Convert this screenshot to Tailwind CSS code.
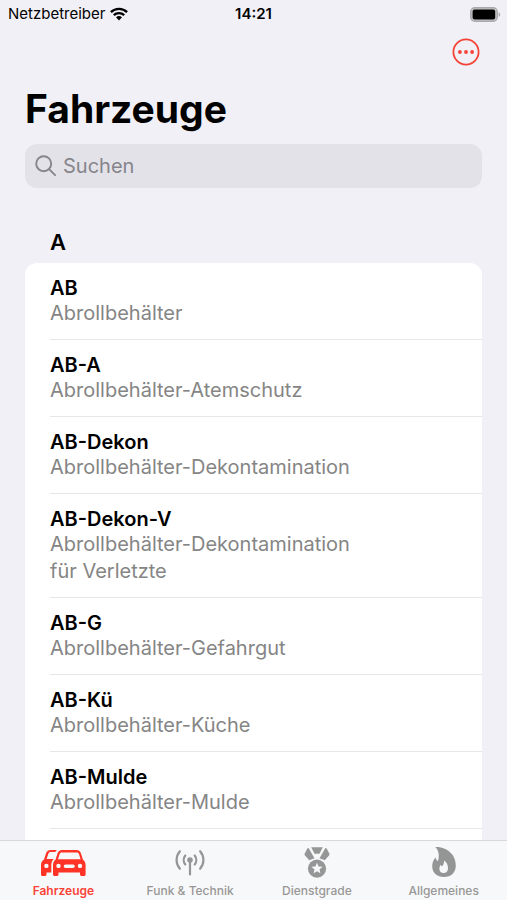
<!DOCTYPE html>
<html lang="de">
<head>
<meta charset="utf-8">
<meta name="viewport" content="width=device-width, initial-scale=1">
<title>Fahrzeuge</title>
<script src="https://cdn.jsdelivr.net/npm/@tailwindcss/browser@4"></script>
</head>
<body class="flex h-screen flex-col overflow-hidden bg-[#f1f0f6] font-['Inter','Liberation_Sans',sans-serif] text-black">
  <div class="grid h-7 shrink-0 grid-cols-3 items-center px-[8px] text-[15px] leading-5">
    <div class="flex items-center gap-[5px]">
      <span>Netzbetreiber</span>
      <svg class="h-[14px] w-[18px] shrink-0" viewBox="0 0 18 14" fill="none" stroke="#000" stroke-width="2.3" aria-hidden="true"><path d="M.9 5.1a11.6 11.6 0 0 1 16.2 0M3.8 8.2a7.5 7.5 0 0 1 10.4 0"/><path d="M6 10.3a4.4 4.4 0 0 1 6 0L9 13.4z" fill="#000" stroke="none"/></svg>
    </div>
    <time class="text-center font-semibold">14:21</time>
    <svg class="h-[15px] w-[29px] justify-self-end overflow-visible" viewBox="0 0 29 15" role="img" aria-label="Batterie voll"><rect x=".8" y=".8" width="26.400" height="13.4" rx="4" fill="#c4c4c7" stroke="#aaaaae" stroke-width="1.5"/><rect x="2.600" y="2.600" width="22.600" height="9.8" rx="2"/><path d="M28.600 5.2c2.2.8 2.2 3.8 0 4.6z" fill="#aaaaae"/></svg>
  </div>

  <header class="shrink-0 px-[25px]">
    <div class="flex h-12 justify-end pt-[10px]">
      <button type="button" aria-label="Mehr" class="mr-[2px] h-7 w-7">
        <svg class="h-7 w-7" viewBox="0 0 28 28" fill="#f44336" aria-hidden="true"><circle cx="14" cy="14" r="12.6" fill="none" stroke="#f44336" stroke-width="1.8"/><circle cx="7.9" cy="14" r="1.9"/><circle cx="14" cy="14" r="1.9"/><circle cx="20.1" cy="14" r="1.9"/></svg>
      </button>
    </div>
    <h1 class="pt-[7px] text-[39px] leading-[52px] font-bold">Fahrzeuge</h1>
    <label class="mt-[9px] flex h-11 items-center gap-[6px] rounded-xl bg-[#e3e2e8] px-[10px]">
      <svg class="h-[22px] w-[22px] shrink-0" viewBox="0 0 22 22" fill="none" stroke="#85858b" stroke-width="1.9" stroke-linecap="round" aria-hidden="true"><circle cx="8.7" cy="8.7" r="7.5"/><path d="m14.3 14.3 5.8 5.8"/></svg>
      <input type="search" aria-label="Suchen" placeholder="Suchen" class="min-w-0 flex-1 bg-transparent text-xl leading-7 outline-none placeholder:text-[#85858b]">
    </label>
  </header>

  <main class="min-h-0 flex-1 overflow-hidden px-[25px] pt-10">
    <h2 class="pb-[7px] pl-[25px] text-[22px] leading-7 font-semibold">A</h2>
    <ul class="rounded-t-xl bg-white pl-[25px]">
      <li class="border-b border-[#e7e7e9] pt-[13px] pb-3"><h3 class="text-xl leading-6 font-semibold">AB</h3><p class="max-w-80 text-xl leading-[27px] text-[#858585]">Abrollbehälter</p></li>
      <li class="border-b border-[#e7e7e9] pt-[13px] pb-3"><h3 class="text-xl leading-6 font-semibold">AB-A</h3><p class="max-w-80 text-xl leading-[27px] text-[#858585]">Abrollbehälter-Atemschutz</p></li>
      <li class="border-b border-[#e7e7e9] pt-[13px] pb-3"><h3 class="text-xl leading-6 font-semibold">AB-Dekon</h3><p class="max-w-80 text-xl leading-[27px] text-[#858585]">Abrollbehälter-Dekontamination</p></li>
      <li class="border-b border-[#e7e7e9] pt-[13px] pb-3"><h3 class="text-xl leading-6 font-semibold">AB-Dekon-V</h3><p class="max-w-80 text-xl leading-[27px] text-[#858585]">Abrollbehälter-Dekontamination für Verletzte</p></li>
      <li class="border-b border-[#e7e7e9] pt-[13px] pb-3"><h3 class="text-xl leading-6 font-semibold">AB-G</h3><p class="max-w-80 text-xl leading-[27px] text-[#858585]">Abrollbehälter-Gefahrgut</p></li>
      <li class="border-b border-[#e7e7e9] pt-[13px] pb-3"><h3 class="text-xl leading-6 font-semibold">AB-Kü</h3><p class="max-w-80 text-xl leading-[27px] text-[#858585]">Abrollbehälter-Küche</p></li>
      <li class="border-b border-[#e7e7e9] pt-[13px] pb-3"><h3 class="text-xl leading-6 font-semibold">AB-Mulde</h3><p class="max-w-80 text-xl leading-[27px] text-[#858585]">Abrollbehälter-Mulde</p></li>
      <li class="h-5"></li>
    </ul>
  </main>

  <nav class="grid shrink-0 grid-cols-4 border-t border-[#d9d9dc] bg-[#f7f8f9] pt-[5px] pb-px text-xs leading-4 font-medium text-[#979797]">
    <a href="#fahrzeuge" aria-current="page" class="flex flex-col items-center gap-[5px] font-semibold text-[#fb4238]">
      <svg class="h-8 w-12" viewBox="0 0 48 32" fill="#ff3427" aria-hidden="true">
        <path fill-rule="evenodd" d="M17.8 4H12C8.8 4 7.7 5.3 6.8 8L5 13.5C3.2 14.7 2 16.5 2 19V28.2C2 29.400 2.7 30 3.7 30H5.8C6.8 30 7.5 29.400 7.500 28.2V26.5H12.3V19.5C12.3 16.8 13 14.6 14.8 13H7.600L9.2 8.3C9.7 6.7 10.4 6.1 12 6.1H16.3C16.7 5.2 17.1 4.5 17.8 4ZM7.400 17.7a2.2 2.2 0 1 1 0 4.4a2.2 2.2 0 1 1 0-4.4Z"/>
        <path fill-rule="evenodd" d="M23 4H37.5C40 4 41.2 5.2 42 7.5L44 13.7C45.8 15 46.6 16.7 46.6 19V28.2C46.6 29.4 46 30 45 30H42.8C41.7 30 41 29.4 41 28.2V26.5H19.5V28.2C19.5 29.4 18.8 30 17.8 30H15.7C14.7 30 14 29.4 14 28.2V19C14 16.7 14.8 15 16.5 13.7L18.5 7.5C19.3 5.2 20.6 4 23 4ZM23 6.4C21.6 6.4 21 7 20.6 8.3L19 13.3H41.6L40 8.3C39.6 7 38.9 6.4 37.5 6.4ZM19.5 17.7a2.2 2.2 0 1 0 0 4.4a2.2 2.2 0 1 0 0-4.4ZM41 17.7a2.2 2.2 0 1 0 0 4.4a2.2 2.2 0 1 0 0-4.4ZM26.5 18.4a1.8 1.8 0 0 0 0 3.6H34a1.8 1.8 0 0 0 0-3.6Z"/>
      </svg>
      <span>Fahrzeuge</span>
    </a>
    <a href="#funk" class="flex flex-col items-center gap-[5px]">
      <svg class="h-8 w-8" viewBox="0 0 32 32" fill="none" stroke="#969696" stroke-width="2.2" stroke-linecap="round" aria-hidden="true"><circle cx="16" cy="14" r="2.8" fill="#969696" stroke="none"/><path d="M16 14V28.5M11.3 9.5a7.2 7.2 0 0 0 0 9M20.7 9.5a7.2 7.2 0 0 1 0 9M5.9 5.2a13.3 13.3 0 0 0 0 17.6M26.1 5.2a13.3 13.3 0 0 1 0 17.6"/></svg>
      <span>Funk &amp; Technik</span>
    </a>
    <a href="#dienstgrade" class="flex flex-col items-center gap-[5px]">
      <svg class="h-8 w-8" viewBox="0 0 32 32" fill="#959797" aria-hidden="true"><path d="M10.2 1.2H21.8L18.5 7.8H13.5ZM7.6 2L13.5 12.3L8.2 14.3L3.8 9.3Q3.2 8.5 3.6 7.7L6.3 2.5ZM24.4 2L18.5 12.3L23.8 14.3L28.2 9.3Q28.8 8.5 28.4 7.7L25.7 2.5Z"/><circle cx="16" cy="22.6" r="9.1"/><path fill="#f7f8f9" d="M16 16.8l1.55 3.65 3.95.35-3 2.6.9 3.85-3.4-2.05-3.4 2.05.9-3.85-3-2.6 3.95-.35Z"/></svg>
      <span>Dienstgrade</span>
    </a>
    <a href="#allgemeines" class="flex flex-col items-center gap-[5px]">
      <svg class="h-8 w-8" viewBox="0 0 32 32" fill="#949696" aria-hidden="true"><path fill-rule="evenodd" d="M7.2 1C17.5 .5 27.8 7.5 27.8 19.5C27.8 26.5 23.2 31 16 31C9 31 4.2 26.6 4.2 20.2C4.2 16.6 5.3 14.1 7.7 11.2C7.7 13 8.4 14.2 10 15.1C11.6 9.5 10.8 4.3 7.2 1ZM16 14.6C16.2 17.2 15.5 18.5 14.2 20.3C13.300 19.9 12.900 19.4 12.700 18.7C11.800 20 11.400 21.200 11.400 22.700C11.400 25.400 13 27.100 15.700 27.100C18.300 27.100 20 25.300 20 22.600C20 19.200 18.800 16.200 16 14.600Z"/></svg>
      <span>Allgemeines</span>
    </a>
  </nav>
</body>
</html>
